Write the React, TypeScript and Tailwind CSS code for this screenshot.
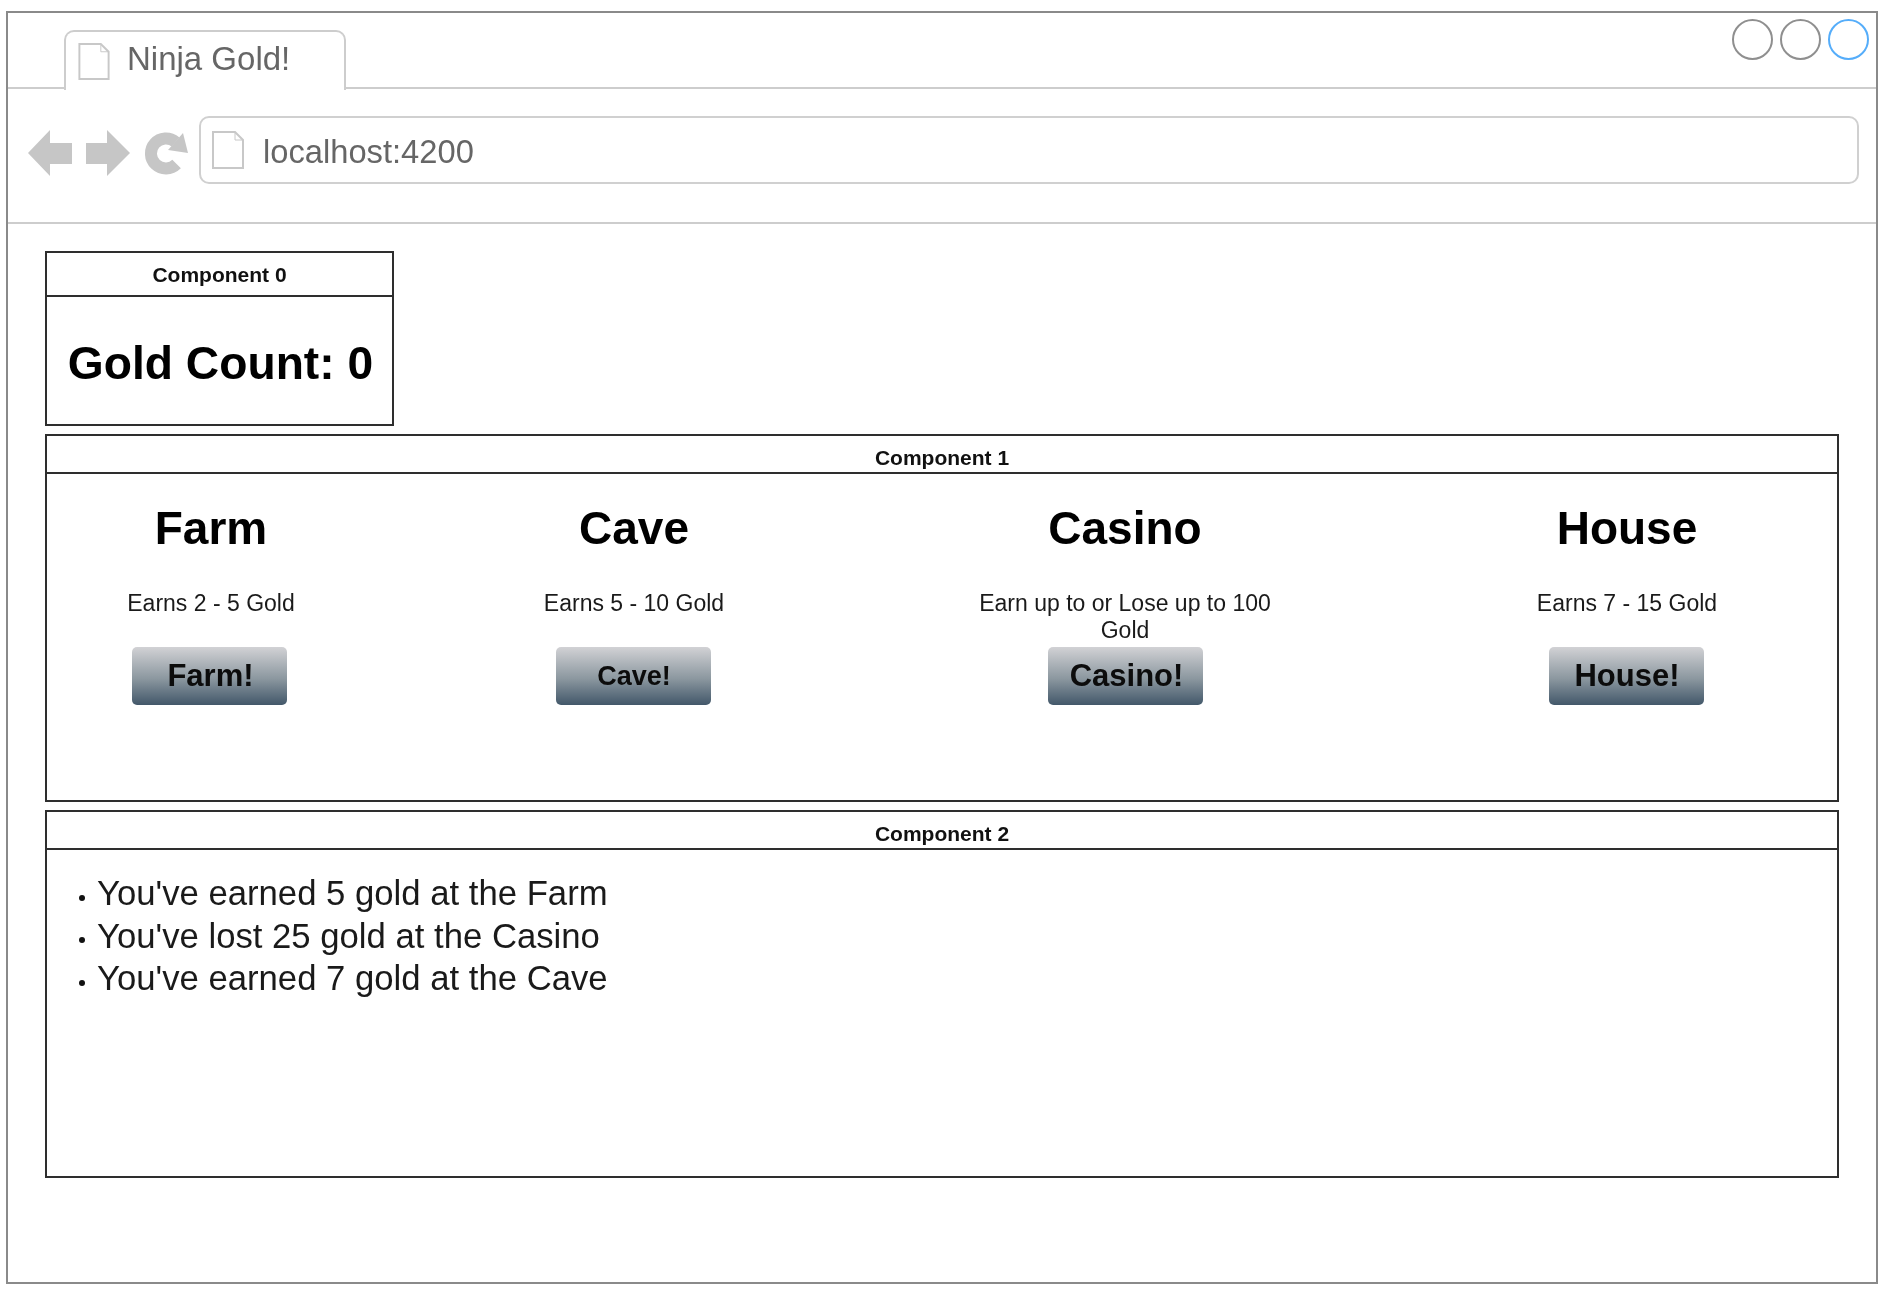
const font = "font-['Liberation_Sans',Arial,sans-serif]";

function PageIcon({ className }: { className: string }) {
  return (
    <svg className={className} viewBox="0 0 32 38" fill="none" stroke="#c8c8c8" strokeWidth="2">
      <path d="M1 1H23L31 9V37H1Z" fill="#fff" />
      <path d="M23 1V9H31" strokeWidth="1" />
    </svg>
  );
}

function Column({ title, desc, button, btnClass, className }: { title: string; desc: string; button: string; btnClass: string; className: string }) {
  return (
    <div className={`w-[300px] shrink-0 flex flex-col items-center text-center ${className}`}>
      <h2 className="mt-[27px] text-[46px] leading-[55px] font-bold text-black">{title}</h2>
      <p className="mt-[34px] h-[57px] text-[23px] leading-[27px] text-[#1a1a1a]">{desc}</p>
      <button className={`w-[155px] h-[58px] pl-[2px] rounded-[5px] bg-gradient-to-b from-[#d2d2d5] via-[#8b979f] via-[55%] to-[#43586a] font-bold text-[#0c0c0c] ${btnClass}`}>
        {button}
      </button>
    </div>
  );
}

function Panel({ title, titleClass, className, children }: { title: string; titleClass: string; className: string; children: React.ReactNode }) {
  return (
    <section className={`border-2 border-[#2e2e2e] flex flex-col ${className}`}>
      <div className={`shrink-0 flex items-center justify-center border-b-2 border-[#2e2e2e] text-[21px] font-bold text-[#111] ${titleClass}`}>{title}</div>
      {children}
    </section>
  );
}

export default function App() {
  return (
    <div className={`w-[1884px] h-[1294px] bg-white pt-[11px] pl-[6px] blur-[0.4px] ${font}`}>
      <div className="w-[1872px] h-[1273px] border-2 border-[#8a8a8a] flex flex-col">
        <div className="h-[76px] shrink-0 flex justify-between border-b-2 border-[#cdcdcd] pl-[56px] pr-[7px]">
          <div className="mt-[16px] w-[282px] h-[60px] -mb-[2px] bg-white border-2 border-b-0 border-[#cdcdcd] rounded-t-[10px] flex items-center pl-[12px] pb-[4px] relative top-[1px]">
            <PageIcon className="w-[32px] h-[37px] mt-[4px]" />
            <span className="ml-[17px] text-[33px] text-[#666]">Ninja Gold!</span>
          </div>
          <div className="flex gap-[7px] mt-[6px]">
            <div className="w-[41px] h-[41px] rounded-full border-2 border-[#8f8f8f]" />
            <div className="w-[41px] h-[41px] rounded-full border-2 border-[#8f8f8f]" />
            <div className="w-[41px] h-[41px] rounded-full border-2 border-[#55adfa]" />
          </div>
        </div>

        <div className="h-[135px] shrink-0 flex items-start border-b-2 border-[#cdcdcd] pl-[20px] pr-[17px] pt-[27px]">
          <svg className="w-[164px] h-[48px] shrink-0 mt-[14px]" viewBox="0 0 164 48" fill="#c6c6c6">
            <path d="M0 23 L22 0 V13 H44 V34 H22 V46 Z" />
            <path d="M58 13 H79 V0 L102 23 L79 46 V34 H58 Z" />
            <path d="M147.6 12 A15 15 0 1 0 148.6 34" fill="none" stroke="#c6c6c6" strokeWidth="12" />
            <path d="M155 3 L160 23 L140 20 Z" />
          </svg>
          <div className="ml-[7px] flex-1 h-[68px] rounded-[10px] border-2 border-[#d0d0d0] flex items-center pl-[11px]">
            <PageIcon className="w-[32px] h-[38px]" />
            <span className="ml-[19px] pt-[4px] text-[32.7px] text-[#666]">localhost:4200</span>
          </div>
        </div>

        <div className="pl-[37px] pt-[27px] flex flex-col gap-[8px]">
          <Panel title="Component 0" titleClass="h-[44px] pt-[2px]" className="w-[349px] h-[175px]">
            <div className="flex-1 flex items-center justify-center text-[46.2px] font-bold text-black pt-[6px] pl-[2px]">Gold Count: 0</div>
          </Panel>
          <Panel title="Component 1" titleClass="h-[38px] pt-[7px]" className="w-[1794px] h-[368px]">
            <div className="flex pl-[14px]">
              <Column title="Farm" desc="Earns 2 - 5 Gold" button="Farm!" btnClass="text-[31px] mr-[3px]" className="" />
              <Column title="Cave" desc="Earns 5 - 10 Gold" button="Cave!" btnClass="text-[27px] mr-[2px]" className="ml-[123px]" />
              <Column title="Casino" desc="Earn up to or Lose up to 100 Gold" button="Casino!" btnClass="text-[31px] ml-[1px]" className="ml-[191px]" />
              <Column title="House" desc="Earns 7 - 15 Gold" button="House!" btnClass="text-[31px] mr-[2px]" className="ml-[202px]" />
            </div>
          </Panel>
          <Panel title="Component 2" titleClass="h-[38px] pt-[7px]" className="w-[1794px] h-[368px]">
            <ul className="pt-[22px] pl-[31px] text-[34.7px] leading-[42.5px] text-[#1a1a1a]">
              {["You've earned 5 gold at the Farm", "You've lost 25 gold at the Casino", "You've earned 7 gold at the Cave"].map((t) => (
                <li key={t} className="flex items-center">
                  <span className="w-[6px] h-[6px] ml-[1px] rounded-full bg-[#111] mt-[9px] mr-[12px]" />
                  {t}
                </li>
              ))}
            </ul>
          </Panel>
        </div>
      </div>
    </div>
  );
}
